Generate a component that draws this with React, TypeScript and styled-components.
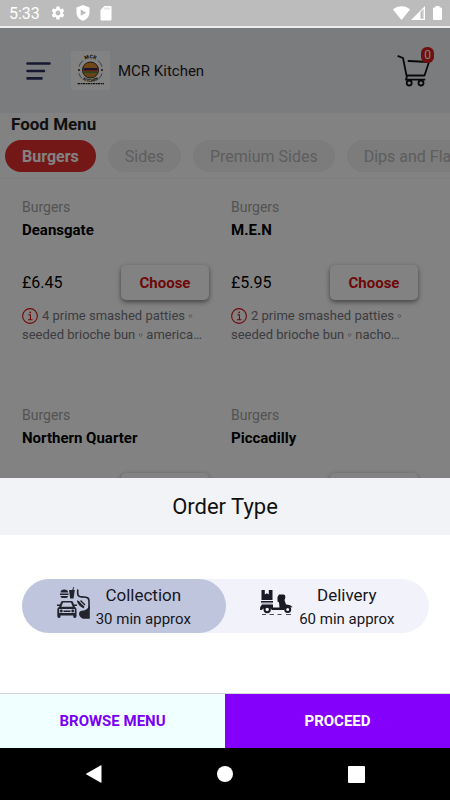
import React, { useState } from "react";
import styled, { createGlobalStyle, css } from "styled-components";
import { MdSettings } from "react-icons/md";

const GlobalStyle = createGlobalStyle`
  *, *::before, *::after { box-sizing: border-box; }
  body {
    margin: 0;
    font-family: Roboto, "Liberation Sans", sans-serif;
    background: #fff;
    color: #000;
  }
  button { font: inherit; border: 0; padding: 0; background: none; cursor: pointer; }
  h1, h2, h3, p { margin: 0; }
  svg { display: block; flex: none; }
`;

const Shell = styled.div`
  display: flex;
  flex-direction: column;
  height: 100vh;
`;

const StatusBar = styled.div`
  flex: none;
  display: flex;
  align-items: center;
  justify-content: space-between;
  height: 28px;
  padding: 0 8px 0 9px;
  background: #bcbcbc;
  border-bottom: 2px solid #eeeeee;
  color: #fff;
  font-size: 16px;
`;

const StatusGroup = styled.div<{ $gap: number }>`
  display: flex;
  align-items: center;
  gap: ${(p) => p.$gap}px;
`;

const Clock = styled.time`
  line-height: 20px;
  padding-top: 2px;
`;

const Stage = styled.div`
  position: relative;
  flex: 1;
  min-height: 0;
  overflow: hidden;
`;

const Header = styled.header`
  display: flex;
  align-items: center;
  height: 85px;
  padding: 0 16px 0 26px;
  background: #f2f4f7;
`;

const MenuButton = styled.button`
  margin-right: 20px;
`;

const Brand = styled.h1`
  flex: 1;
  margin-left: 8px;
  font-size: 15px;
  font-weight: 400;
  line-height: 20px;
  color: #1c1c1c;
`;

const CartButton = styled.button`
  position: relative;
  width: 37px;
  height: 48px;
  display: flex;
  align-items: center;
`;

const CartBadge = styled.span`
  position: absolute;
  top: 0;
  right: 0;
  width: 13px;
  height: 16px;
  border-radius: 6px;
  background: #d8201c;
  color: #fff;
  font-size: 12px;
  line-height: 16px;
  text-align: center;
`;

const SectionTitle = styled.h2`
  padding: 0 11px;
  font-size: 17px;
  font-weight: 700;
  line-height: 22px;
  color: #222;
`;

const Tabs = styled.nav`
  display: flex;
  gap: 12px;
  padding: 5px 5px 6px;
  border-bottom: 1px solid #f6f6f6;
  overflow: hidden;
`;

const Tab = styled.button<{ $active?: boolean }>`
  flex: none;
  height: 32px;
  padding: 0 17px;
  border-radius: 16px;
  font-size: 16px;
  white-space: nowrap;
  background: #f3f3f3;
  color: #b8b8b8;
  ${(p) =>
    p.$active &&
    css`
      background: #e3302d;
      color: #fff;
      font-weight: 700;
    `}
`;

const Grid = styled.main`
  display: grid;
  grid-template-columns: 1fr 1fr;
  column-gap: 22px;
  padding: 18px 32px 0 22px;
`;

const Card = styled.article`
  min-width: 0;
  height: 208px;
`;

const Category = styled.p`
  font-size: 14px;
  line-height: 20px;
  color: #a4a4a4;
`;

const Name = styled.h3`
  margin-top: 3px;
  font-size: 15px;
  font-weight: 700;
  line-height: 20px;
`;

const BuyRow = styled.div`
  display: flex;
  align-items: center;
  justify-content: space-between;
  margin: 25px 0 6px;
`;

const Price = styled.span`
  font-size: 16px;
  line-height: 20px;
`;

const ChooseButton = styled.button`
  width: 88px;
  height: 35px;
  border-radius: 5px;
  background: #fff;
  box-shadow: 0 2px 5px rgba(0, 0, 0, 0.5);
  color: #d80f0f;
  font-size: 15px;
  font-weight: 700;
`;

const Description = styled.p`
  font-size: 13px;
  line-height: 19px;
  color: #777780;

  svg {
    display: inline-block;
    vertical-align: -4px;
    margin-right: 4px;
  }
`;

const Scrim = styled.div`
  position: absolute;
  inset: 0;
  display: flex;
  flex-direction: column;
  justify-content: flex-end;
  background: rgba(0, 0, 0, 0.49);
`;

const Sheet = styled.section`
  background: #fff;
`;

const SheetTitle = styled.h2`
  padding: 16px 0 15px;
  background: #f2f3f6;
  color: #111;
  font-size: 22px;
  font-weight: 400;
  line-height: 26px;
  text-align: center;
`;

const SheetBody = styled.div`
  padding: 44px 21px 60px 22px;
`;

const Segments = styled.fieldset`
  display: grid;
  grid-template-columns: 1fr 1fr;
  margin: 0;
  padding: 0;
  border: 0;
  border-radius: 27px;
  background: #f2f3fa;
`;

const Segment = styled.label`
  position: relative;
  display: flex;
  justify-content: center;
  gap: 6px;
  height: 54px;
  padding-top: 4px;
  border-radius: 27px;
  color: #16161c;
  cursor: pointer;

  &:has(input:checked) { background: #bfc5dd; }
  svg { margin-top: 4px; }
`;

const HiddenRadio = styled.input`
  position: absolute;
  opacity: 0;
  width: 1px;
  height: 1px;
  margin: 0;
`;

const SegmentText = styled.span`
  display: flex;
  flex-direction: column;
  align-items: center;
`;

const SegmentTitle = styled.span`
  font-size: 17px;
  line-height: 24px;
`;

const SegmentNote = styled.span`
  font-size: 15px;
  line-height: 24px;
`;

const Actions = styled.div`
  display: grid;
  grid-template-columns: 1fr 1fr;
  border-top: 1px solid #d5d5dc;
`;

const Action = styled.button<{ $primary?: boolean }>`
  height: 54px;
  font-size: 15px;
  font-weight: 700;
  background: ${(p) => (p.$primary ? "#8400fa" : "#f0ffff")};
  color: ${(p) => (p.$primary ? "#fff" : "#7a00f5")};
`;

const NavBar = styled.nav`
  flex: none;
  display: grid;
  grid-template-columns: 128px 1fr 128px;
  align-items: center;
  justify-items: center;
  height: 52px;
  padding: 0 30px;
  background: #000;
`;

const ShieldIcon = () => (
  <svg width="14" height="16" viewBox="0 0 14 16" aria-hidden="true">
    <path fill="#fff" fillRule="evenodd" d="M7 0 13.500 2.500V7.500C13.500 11.500 10.700 14.600 7 15.700 3.300 14.600.5 11.500.5 7.500V2.500ZM4.700 4.500V10.800L10.200 7.650Z" />
  </svg>
);

const SdIcon = () => (
  <svg width="12" height="15" viewBox="0 0 12 15" aria-hidden="true">
    <path fill="#fff" d="M4.500 0H10.500Q11.500 0 11.500 1V13.500Q11.500 14.500 10.500 14.500H1.500Q.5 14.500.5 13.500V4Z" />
    <path stroke="#bcbcbc" strokeWidth=".7" d="M5 1.500V3.500M7 1.500V3.500M9 1.500V3.500" />
  </svg>
);

const WifiIcon = () => (
  <svg width="17" height="14" viewBox="0 0 17 14" aria-hidden="true">
    <path fill="#fff" d="M8.500 14 0 3.400C4.800-.8 12.200-.8 17 3.400Z" />
  </svg>
);

const SignalIcon = () => (
  <svg width="14" height="14" viewBox="0 0 14 14" aria-hidden="true">
    <path fill="#fff" fillRule="evenodd" d="M14 0V14H0ZM9.500 6V12.800H12.600V3Z" />
    <path fill="#fff" d="M11.500 5H12.300V12H11.500Z" opacity=".5" />
  </svg>
);

const BatteryIcon = () => (
  <svg width="9" height="14" viewBox="0 0 9 14" aria-hidden="true">
    <path fill="#fff" d="M2.500 0H6.500V1.500H8Q9 1.500 9 2.500V13Q9 14 8 14H1Q0 14 0 13V2.500Q0 1.500 1 1.500H2.500Z" />
  </svg>
);

const BarsIcon = () => (
  <svg width="25" height="18" viewBox="0 0 25 18" fill="none" stroke="#2e3160" strokeWidth="2.600" strokeLinecap="round" aria-hidden="true">
    <path d="M1.500 1.500H23.500M1.500 9H18M1.500 16.400H15.500" />
  </svg>
);

const BrandLogo = () => (
  <svg width="39" height="39" viewBox="0 0 39 39" role="img" aria-label="MCR Kitchen logo">
    <defs>
      <path id="logo-top" d="M10 12A12 12 0 0 1 29 12" />
      <path id="logo-bottom" d="M7 22.500A13.500 13.500 0 0 0 32 22.500" />
    </defs>
    <rect width="39" height="39" rx="1" fill="#fff" />
    <path d="M12 9.500A12 12 0 0 0 8 15.500M27 9.500A12 12 0 0 1 31 15.500M8 22.500A12 12 0 0 0 11 27.500M31 22.500A12 12 0 0 1 28 27.500" fill="none" stroke="#55555f" strokeWidth=".8" />
    <text fontSize="5" fontWeight="900" fill="#3a2a08" textAnchor="middle">
      <textPath href="#logo-top" startOffset="50%">MCR</textPath>
    </text>
    <circle cx="19.500" cy="19" r="8" fill="#c98a3a" stroke="#3a2a2a" strokeWidth="1" />
    <path d="M13 16.500Q13.500 12 19.500 12T26 16.500Z" fill="#e08a2a" />
    <path d="M12.500 17H26.500V19H12.500Z" fill="#33285f" />
    <path d="M13 19H26V20.500H13Z" fill="#c2352a" />
    <path d="M13 20.500H26V22H13Z" fill="#4c8a35" />
    <path d="M14 22.500H25Q24.500 25 19.500 25T14 22.500Z" fill="#d08028" />
    <circle cx="8" cy="19" r="1" fill="#4a1d16" />
    <circle cx="31" cy="19" r="1" fill="#4a1d16" />
    <text fontSize="4" fontWeight="900" fill="#3a2a08" textAnchor="middle">
      <textPath href="#logo-bottom" startOffset="50%">KITCHEN</textPath>
    </text>
    <path d="M6.500 32.600H33" stroke="#222" strokeWidth="1.100" strokeDasharray="2.500 .6 1.500 .5" />
  </svg>
);

const CartIcon = () => (
  <svg width="35" height="32" viewBox="0 0 35 32" fill="none" stroke="#111" strokeWidth="1.800" strokeLinecap="round" strokeLinejoin="round" aria-hidden="true">
    <path d="M1.200 1.200 6 3 9.500 20.500H27.500L32 7 11.500 6M10 21 9 24.700H27.500" />
    <circle cx="12.200" cy="28" r="2.500" />
    <circle cx="24" cy="28" r="2.500" />
  </svg>
);

const InfoIcon = () => (
  <svg width="16" height="16" viewBox="0 0 16 16" fill="none" stroke="#e01010" aria-hidden="true">
    <circle cx="8" cy="8" r="7.400" strokeWidth="1.100" />
    <path strokeWidth="1.100" d="M6.300 6.700H8.400V11.600M6 11.800H10.600" />
    <circle cx="8.200" cy="4.300" r=".9" fill="#e01010" stroke="none" />
  </svg>
);

const CollectionIcon = () => (
  <svg width="33" height="32" viewBox="0 0 33 32" fill="#23232d" aria-hidden="true">
    <path d="M3.500 5.500Q3.500 2.600 7.300 2.600T11 5.500ZM3 6.500H11.500V8H3ZM3.500 9H11Q11 11 9 11H5.500Q3.500 11 3.500 9Z" />
    <path d="M12 3H15.200L16.400 0 17.200.3 16.300 3H17.800L16.500 11.500H13.200Z" />
    <path fill="none" stroke="#23232d" strokeWidth="1.600" strokeLinecap="round" d="M20.700 3V6.500Q20.700 9.700 24.500 9.900L29 10.300Q32 10.700 32 14V22" />
    <path fillRule="evenodd" d="M5.500 14H14.500Q15.500 14 16 15L18 20Q19.500 20.800 19.500 22.500V29Q19.500 31 17.900 31T16.300 29.500V28.500H3.500V29.500Q3.500 31 1.900 31T.3 29V22.500Q.3 20.800 2 20L4 15Q4.500 14 5.500 14ZM6 15.600 4.300 19.800H15.700L14 15.600ZM2.200 22V26H17.800V22Z" />
    <path d="M0 17.500H3V19H0ZM17 17.500H20V19H17ZM6.500 23.500H13.500V25H6.500Z" />
    <circle cx="4.300" cy="24" r="1.400" />
    <circle cx="15.700" cy="24" r="1.400" />
    <path d="M20 13.300 22.500 14.500 24.500 17 27.500 19.500 26.500 21.500 22.500 18.800 20.300 15.500ZM24 13 28.500 17.500 27.500 18.500 23 14Z" />
    <path d="M32.800 18V31.700H26Q22 30 22 26.500 22.500 23.200 27 23.500 30.500 22.500 32.800 18Z" />
  </svg>
);

const DeliveryIcon = () => (
  <svg width="33" height="32" viewBox="0 0 33 32" fill="#191a26" aria-hidden="true">
    <path d="M1.500 3H4.800V7.500L6.800 6.200 8.800 7.500V3H12.500V13H1.500Z" />
    <path d="M1 14H13V15.700H1Z" />
    <path fill="#bfb8c4" d="M1.500 15.700H12.500V17.500H1.500Z" />
    <path d="M2 17.500H13V20.500H19.500L19 15.500 17.500 14.500V10L19 7.500H23.500Q25.300 7.500 25.300 9.500V11L24.500 13 26 17.500Q30.500 17.200 32.500 20L31.500 20.500Q27 18 24 23H12Q9.500 19 4.500 21L1.500 23H0Q0 19 2 17.500Z" />
    <circle cx="7.200" cy="22.500" r="2.700" fill="#f2f3fa" stroke="#191a26" strokeWidth="2" />
    <circle cx="27.700" cy="22.500" r="2.500" fill="#f2f3fa" stroke="#191a26" strokeWidth="2" />
    <path fill="none" stroke="#4a4b58" strokeWidth="1.200" d="M2 27.500H6M9.500 27.500H14M17.500 27.500H21.500M26 27.500H31" />
  </svg>
);

const categories = ["Burgers", "Sides", "Premium Sides", "Dips and Flavours"];

const dishes = [
  { name: "Deansgate", price: "£6.45", text: "4 prime smashed patties ◦ seeded brioche bun ◦ america…" },
  { name: "M.E.N", price: "£5.95", text: "2 prime smashed patties ◦ seeded brioche bun ◦ nacho…" },
  { name: "Northern Quarter", price: "£6.45", text: "2 prime smashed patties ◦ seeded brioche bun…" },
  { name: "Piccadilly", price: "£5.95", text: "2 prime smashed patties ◦ seeded brioche bun…" },
];

const orderTypes = [
  { id: "collection", title: "Collection", note: "30 min approx", Icon: CollectionIcon },
  { id: "delivery", title: "Delivery", note: "60 min approx", Icon: DeliveryIcon },
];

export default function App() {
  const [orderType, setOrderType] = useState("collection");

  return (
    <>
      <GlobalStyle />
      <Shell>
        <StatusBar>
          <StatusGroup $gap={10}>
            <Clock>5:33</Clock>
            <MdSettings size={16} aria-hidden="true" />
            <ShieldIcon />
            <SdIcon />
          </StatusGroup>
          <StatusGroup $gap={1}>
            <WifiIcon />
            <StatusGroup $gap={8}>
              <SignalIcon />
              <BatteryIcon />
            </StatusGroup>
          </StatusGroup>
        </StatusBar>

        <Stage>
          <Header>
            <MenuButton aria-label="Open menu">
              <BarsIcon />
            </MenuButton>
            <BrandLogo />
            <Brand>MCR Kitchen</Brand>
            <CartButton aria-label="Cart">
              <CartIcon />
              <CartBadge>0</CartBadge>
            </CartButton>
          </Header>
          <SectionTitle>Food Menu</SectionTitle>
          <Tabs aria-label="Categories">
            {categories.map((c, i) => (
              <Tab key={c} $active={i === 0}>
                {c}
              </Tab>
            ))}
          </Tabs>
          <Grid>
            {dishes.map((d) => (
              <Card key={d.name}>
                <Category>Burgers</Category>
                <Name>{d.name}</Name>
                <BuyRow>
                  <Price>{d.price}</Price>
                  <ChooseButton>Choose</ChooseButton>
                </BuyRow>
                <Description>
                  <InfoIcon />
                  {d.text}
                </Description>
              </Card>
            ))}
          </Grid>

          <Scrim>
            <Sheet role="dialog" aria-labelledby="order-type-title">
              <SheetTitle id="order-type-title">Order Type</SheetTitle>
              <SheetBody>
                <Segments aria-labelledby="order-type-title">
                  {orderTypes.map(({ id, title, note, Icon }) => (
                    <Segment key={id}>
                      <HiddenRadio
                        type="radio"
                        name="order-type"
                        value={id}
                        checked={orderType === id}
                        onChange={() => setOrderType(id)}
                      />
                      <Icon />
                      <SegmentText>
                        <SegmentTitle>{title}</SegmentTitle>
                        <SegmentNote>{note}</SegmentNote>
                      </SegmentText>
                    </Segment>
                  ))}
                </Segments>
              </SheetBody>
              <Actions>
                <Action>BROWSE MENU</Action>
                <Action $primary>PROCEED</Action>
              </Actions>
            </Sheet>
          </Scrim>
        </Stage>

        <NavBar aria-label="System">
          <button aria-label="Back">
            <svg width="18" height="18" viewBox="0 0 18 18">
              <path fill="#fff" d="M15.500.5Q16.500 0 16.500 1V17Q16.500 18 15.500 17.500L1.500 9.600Q.5 9 1.500 8.400Z" />
            </svg>
          </button>
          <button aria-label="Home">
            <svg width="16" height="16" viewBox="0 0 16 16">
              <circle cx="8" cy="8" r="8" fill="#fff" />
            </svg>
          </button>
          <button aria-label="Recent apps">
            <svg width="17" height="17" viewBox="0 0 17 17">
              <rect width="17" height="17" rx="1" fill="#fff" />
            </svg>
          </button>
        </NavBar>
      </Shell>
    </>
  );
}
